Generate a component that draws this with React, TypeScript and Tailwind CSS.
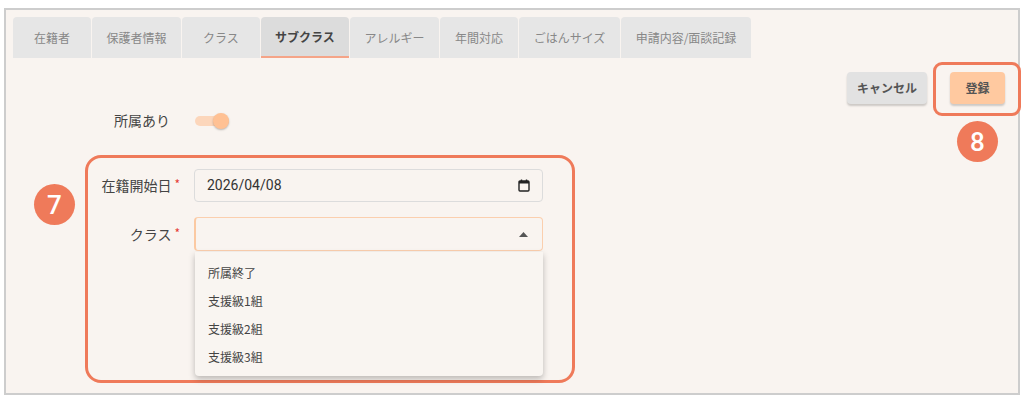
import { useState } from 'react';

const tabs = [
	{ label: '在籍者', w: 'w-[78px]' },
	{ label: '保護者情報', w: 'w-[89px]' },
	{ label: 'クラス', w: 'w-[78px]' },
	{ label: 'サブクラス', w: 'w-[88px]' },
	{ label: 'アレルギー', w: 'w-[89px]' },
	{ label: '年間対応', w: 'w-[78px]' },
	{ label: 'ごはんサイズ', w: 'w-[101px]' },
	{ label: '申請内容/面談記録', w: 'w-[130px]' },
];

const options = ['所属終了', '支援級1組', '支援級2組', '支援級3組'];

const Marker = ({ n, className }: { n: string; className: string }) => (
	<div
		className={`absolute flex items-center justify-center w-[41px] h-[41px] rounded-full bg-[#ef7a5a] text-white text-[26px] font-medium font-['Roboto',sans-serif] leading-none ${className}`}
	>
		{n}
	</div>
);

const App = () => {
	const [active] = useState(3);
	const [member, setMember] = useState(true);

	return (
		<div className="w-[1024px] h-[398px] bg-white pt-[8px] pl-[4px] font-['Noto_Sans_CJK_JP','Noto_Sans',sans-serif] text-[#444]">
			<div className="relative w-[1016px] h-[387px] border-2 border-[#cdcdcd] bg-[#f9f4f0] px-[7px] pt-[7px]">
				{/* tabs */}
				<div className="flex gap-px">
					{tabs.map((t, i) => (
						<div
							key={t.label}
							className={`${t.w} h-[41px] flex items-center justify-center rounded-t-[4px] text-[12px] ${
								i === active
									? 'bg-[#dcdcdc] text-[#444] font-bold border-b-2 border-[#f5a488]'
									: 'bg-[#e6e6e6] text-[#888]'
							}`}
						>
							{t.label}
						</div>
					))}
				</div>

				{/* actions */}
				<div className="flex justify-end gap-[23px] mt-[14px] pr-[6px]">
					<button className="w-[80px] h-[32px] rounded-[4px] bg-[#e2e2e2] text-[12px] font-bold text-[#555] shadow-[0_2px_2px_rgba(0,0,0,0.18)]">
						キャンセル
					</button>
					<button className="w-[55px] h-[32px] rounded-[4px] bg-[#ffc9a0] text-[12px] font-bold text-[#555] shadow-[0_2px_2px_rgba(0,0,0,0.18)]">
						登録
					</button>
				</div>

				{/* member toggle */}
				<div className="flex items-center mt-[6px] pl-[101px]">
					<span className="text-[14px] text-[#444]">所属あり</span>
					<button
						onClick={() => setMember(!member)}
						className="relative ml-[25px] w-[34px] h-[14px] flex items-center"
					>
						<span className="w-[34px] h-[10px] rounded-full bg-[#fcd6bb]" />
						<span className="absolute right-0 w-[16px] h-[16px] rounded-full bg-[#ffc194] shadow-[0_1px_2px_rgba(0,0,0,0.25)]" />
					</button>
				</div>

				{/* form */}
				<div className="mt-[24px] ml-[72px] w-[490px] h-[228px] border-[3px] border-[#ef7a5a] rounded-[16px] pt-[11px]">
					<div className="flex items-center">
						<div className="w-[92px] text-right text-[14px] text-[#444]">
							在籍開始日<span className="text-[#e53935] ml-[3px] text-[12px] align-top">*</span>
						</div>
						<div className="ml-[14px] w-[349px] h-[33px] flex items-center justify-between border border-[#dcdcdc] rounded-[4px] pl-[12px] pr-[12px]">
							<span className="text-[14px] text-[#333] font-['Roboto',sans-serif]">2026/04/08</span>
							<svg width="12" height="13" viewBox="0 0 12 13" fill="none">
								<rect x="1" y="2" width="10" height="10" rx="1" stroke="#222" strokeWidth="1.4" />
								<rect x="1" y="2" width="10" height="2.5" fill="#222" />
								<line x1="3.5" y1="0.5" x2="3.5" y2="2.5" stroke="#222" strokeWidth="1.4" />
								<line x1="8.5" y1="0.5" x2="8.5" y2="2.5" stroke="#222" strokeWidth="1.4" />
							</svg>
						</div>
					</div>
					<div className="flex items-center mt-[15px]">
						<div className="w-[92px] text-right text-[14px] text-[#444]">
							クラス<span className="text-[#e53935] ml-[3px] text-[12px] align-top">*</span>
						</div>
						<div className="relative ml-[14px] w-[349px]">
							<div className="h-[34px] flex items-center justify-end border border-[#fbcfae] border-l-2 border-l-[#fbc9a2] rounded-[4px] pr-[14px]">
								<svg width="9" height="5" viewBox="0 0 9 5">
									<path d="M0 5 L4.5 0 L9 5 Z" fill="#555" />
								</svg>
							</div>
							<div className="absolute left-px top-[35px] w-[348px] h-[124px] bg-[#f9f5f1] rounded-b-[4px] shadow-[0_3px_6px_rgba(0,0,0,0.25)] pt-[7px]">
								{options.map((o) => (
									<div key={o} className="h-[28px] flex items-center pl-[13px] text-[12px] text-[#444]">
										{o}
									</div>
								))}
							</div>
						</div>
					</div>
				</div>

				{/* annotations */}
				<Marker n="7" className="left-[28px] top-[174px]" />
				<div className="absolute left-[927px] top-[52px] w-[88px] h-[54px] border-[3px] border-[#ef7a5a] rounded-[9px]" />
				<Marker n="8" className="left-[951px] top-[111px]" />
			</div>
		</div>
	);
};

export default App;
